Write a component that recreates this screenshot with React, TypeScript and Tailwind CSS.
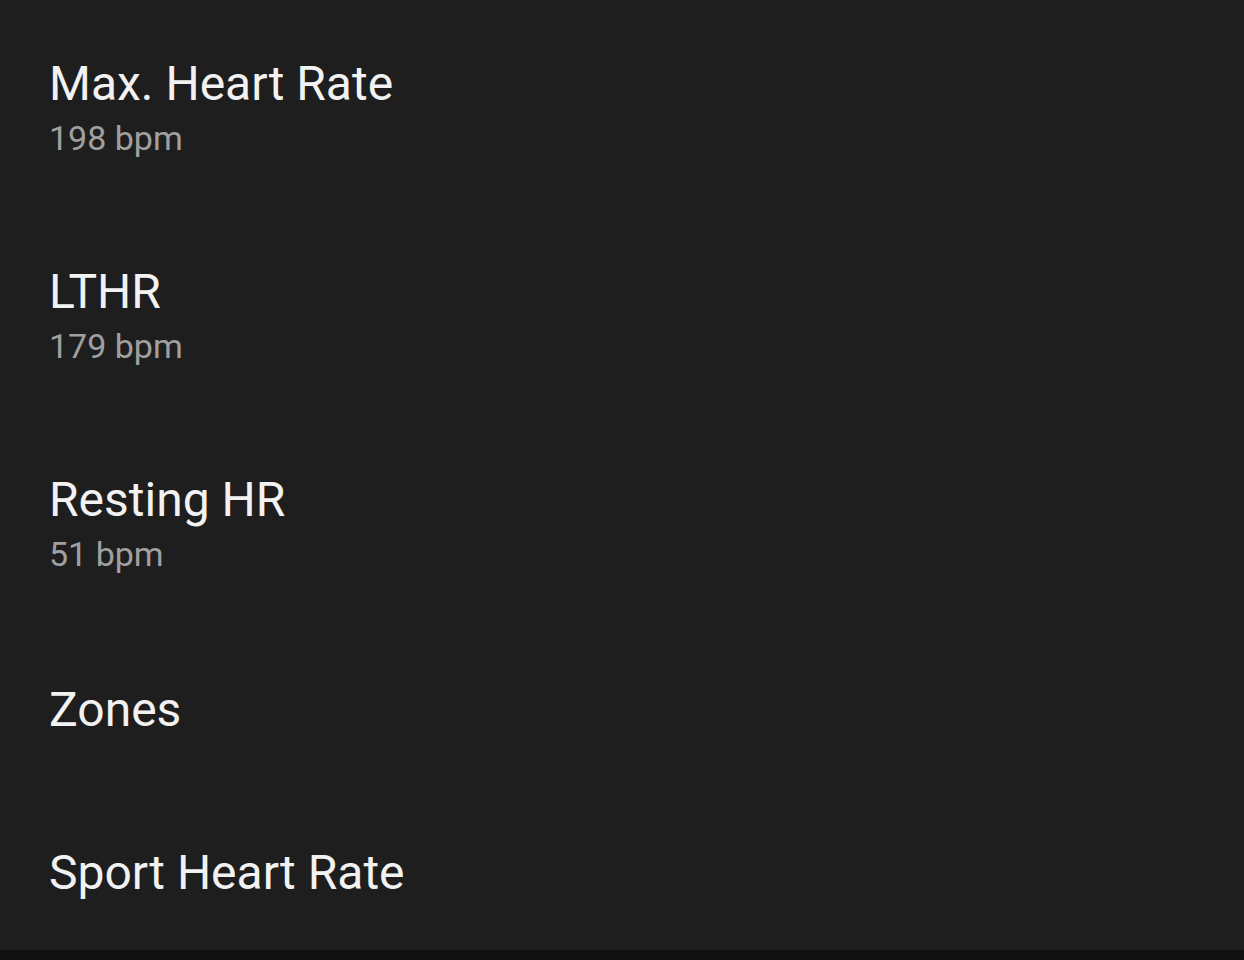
import React from "react";

const rows: { title: string; sub?: string; h: string }[] = [
  { title: "Max. Heart Rate", sub: "198 bpm", h: "h-[208px] pt-[8px]" },
  { title: "LTHR", sub: "179 bpm", h: "h-[208px] pt-[8px]" },
  { title: "Resting HR", sub: "51 bpm", h: "h-[208px] pt-[8px]" },
  { title: "Zones", h: "h-[170px]" },
  { title: "Sport Heart Rate", h: "h-[156px]" },
];

export default function App() {
  return (
    <div className="w-[1244px] h-[960px] bg-[#1e1e1e] flex flex-col font-['Roboto',sans-serif] overflow-hidden">
      <div className="flex flex-col">
        {rows.map((r) => (
          <div key={r.title} className={`${r.h} flex flex-col justify-center pl-[49px]`}>
            <div className="text-[48px] leading-[56px] text-[#f2f2f2] translate-y-[1px]">{r.title}</div>
            {r.sub && <div className="text-[34px] leading-[50px] text-[#a0a0a0] translate-y-[2px]">{r.sub}</div>}
          </div>
        ))}
      </div>
      <div className="flex-1 bg-[#111111]" />
    </div>
  );
}
